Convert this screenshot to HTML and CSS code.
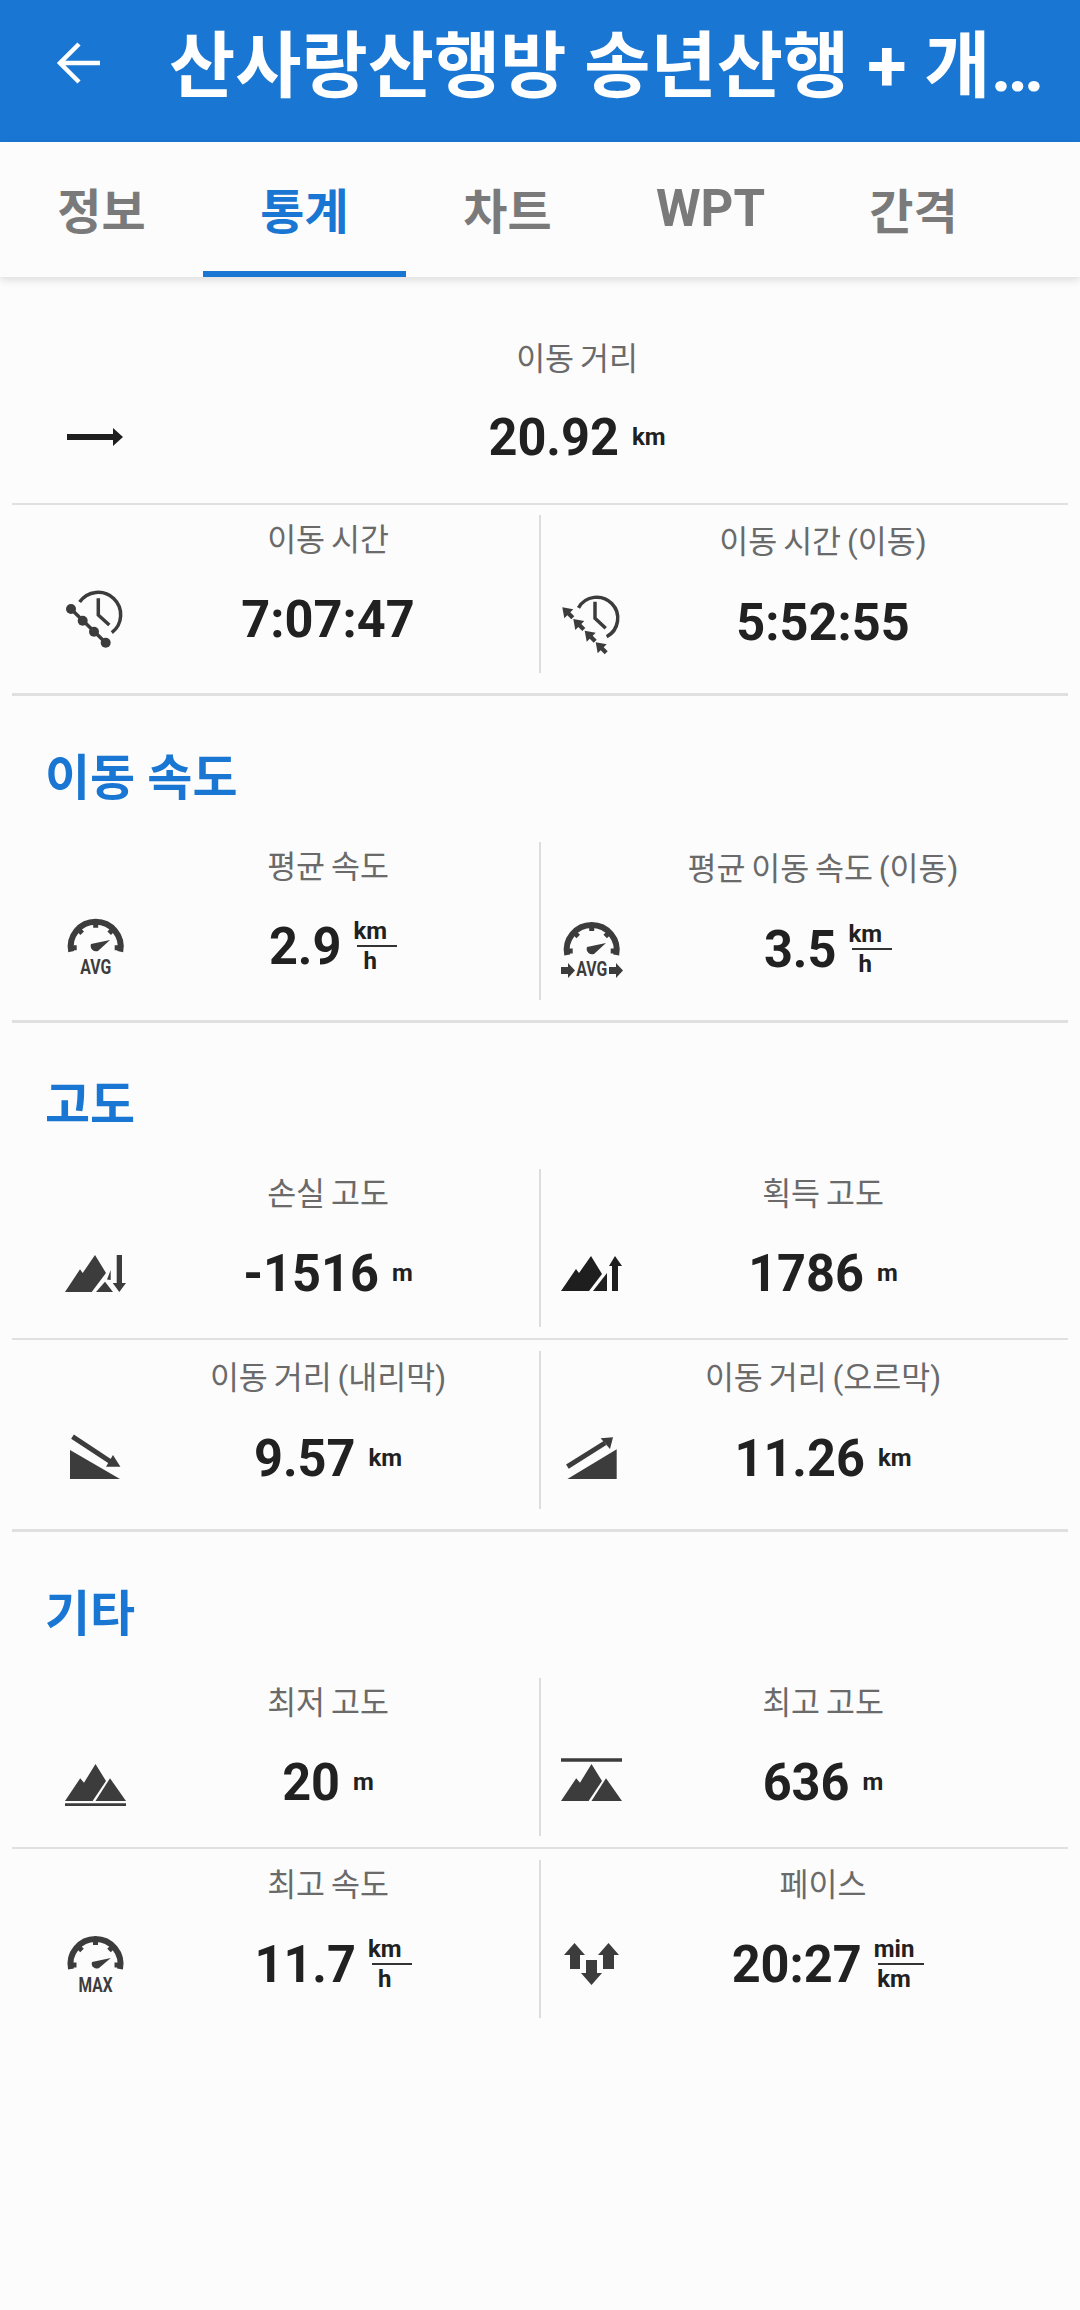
FILE: index.html
```html
<!DOCTYPE html>
<html lang="ko">
<head>
<meta charset="utf-8">
<title>통계</title>
<link rel="stylesheet" href="styles.css">
</head>
<body>
<svg class="defs" width="0" height="0" aria-hidden="true">
  <defs>
    <g id="peak"><path d="M0 49 15.2 26.3 19 30.7 30.5 12 41 29 27.6 49Z"/><path d="M45 26.3 61 49H30.5Z"/></g>
    <g id="gauge-ticks" fill="none" stroke="#3c3c3c">
      <path stroke-width="6" d="M-24.500 5A25 25 0 1 1 24.500 5"/>
      <path stroke-width="5" d="M-24 1h5M24 1h-5M0-24v5M-17-17l3.500 3.500M17-17l-3.500 3.500"/>
    </g>
  </defs>
</svg>
<header class="appbar">
  <svg class="back" viewBox="0 0 46 44"><path d="M44 22H5M23 3 4 22l19 19" fill="none" stroke="#fff" stroke-width="4.500"/></svg>
  <h1 class="title">산사랑산행방 송년산행 + 개…</h1>
</header>
<nav class="tabs">
  <span class="tab">정보</span>
  <span class="tab active">통계</span>
  <span class="tab">차트</span>
  <span class="tab latin">WPT</span>
  <span class="tab">간격</span>
</nav>
<main class="content">
  <section class="block">
    <div class="wide">
      <div class="cell full">
        <div class="label">이동 거리</div>
        <svg class="icon" viewBox="0 0 60 60"><path d="M2 27h46v-6l10 9-10 9v-6H2Z" fill="#1e1e1e"/></svg>
        <div class="value"><span class="num">20.92</span><span class="unit">km</span></div>
      </div>
    </div>
    <div class="row">
      <div class="cell">
        <div class="label">이동 시간</div>
        <svg class="icon" viewBox="0 -1 60 60">
          <path d="M14.600 12.100A22.500 22.500 0 1 1 46.800 42.700M33.300 8.300V25L44.300 35" fill="none" stroke="#3c3c3c" stroke-width="3.500"/>
          <path d="M6 19 40.700 52.700" stroke="#3c3c3c" stroke-width="3.500"/>
          <g fill="#3c3c3c"><circle cx="6" cy="19" r="5"/><circle cx="17.700" cy="30.700" r="5"/><circle cx="29" cy="41.700" r="5"/><circle cx="40.700" cy="52.700" r="5"/></g>
        </svg>
        <div class="value"><span class="num">7:07:47</span></div>
      </div>
      <div class="cell tall">
        <div class="label">이동 시간 (이동)</div>
        <svg class="icon" viewBox="0 2 60 60">
          <path d="M18.500 17.800A21 21 0 1 1 46.700 46.700M35 11.700V28.300L45.700 38.300" fill="none" stroke="#3c3c3c" stroke-width="3.500"/>
          <g fill="#3c3c3c">
            <path transform="translate(8.300 23.300)" d="M-6-6 5-4 2-1 6 3 3 6-1 2-4 5Z"/>
            <path transform="translate(19.300 35)" d="M-6-6 5-4 2-1 6 3 3 6-1 2-4 5Z"/>
            <path transform="translate(30.700 46.700)" d="M-6-6 5-4 2-1 6 3 3 6-1 2-4 5Z"/>
            <path transform="translate(41.700 58.300)" d="M-6-6 5-4 2-1 6 3 3 6-1 2-4 5Z"/>
          </g>
        </svg>
        <div class="value"><span class="num">5:52:55</span></div>
      </div>
    </div>
  </section>

  <section class="block">
    <h2 class="heading">이동 속도</h2>
    <div class="row">
      <div class="cell">
        <div class="label">평균 속도</div>
        <svg class="icon" viewBox="0 2 60 60">
          <use href="#gauge-ticks" x="30.700" y="32.700"/>
          <path d="M26 30 45 26 33 37A5.500 5.500 0 0 1 26 30Z" fill="#3c3c3c"/>
          <text class="badge" x="30.700" y="60" textLength="31" lengthAdjust="spacingAndGlyphs">AVG</text>
        </svg>
        <div class="value"><span class="num">2.9</span><span class="frac"><span>km</span><span class="bar"></span><span>h</span></span></div>
      </div>
      <div class="cell tall">
        <div class="label">평균 이동 속도 (이동)</div>
        <svg class="icon" viewBox="0 5 60 60">
          <use href="#gauge-ticks" x="31.700" y="36"/>
          <path d="M27 33 46 29 34 40A5.500 5.500 0 0 1 27 33Z" fill="#3c3c3c"/>
          <path d="M1 53h7v-4l7 7.500-7 7.500v-4H1ZM49 53h7v-4l7 7.500-7 7.500v-4h-7Z" fill="#3c3c3c"/>
          <text class="badge" x="31.700" y="62" textLength="31" lengthAdjust="spacingAndGlyphs">AVG</text>
        </svg>
        <div class="value"><span class="num">3.5</span><span class="frac"><span>km</span><span class="bar"></span><span>h</span></span></div>
      </div>
    </div>
  </section>

  <section class="block">
    <h2 class="heading">고도</h2>
    <div class="row">
      <div class="cell">
        <div class="label">손실 고도</div>
        <svg class="icon" viewBox="0 0 60 60">
          <path d="M0 49 15 26.300 17.700 30 30 12 41 30 26.700 49Z" fill="#3c3c3c"/>
          <path d="M40 38.700 31 49H48Z" fill="#3c3c3c"/>
          <path d="M45.700 27V37L42 36.500Z" fill="#3c3c3c"/>
          <path d="M51.700 12H57V40H61L54.300 49 47.700 40H51.700Z" fill="#3c3c3c"/>
        </svg>
        <div class="value"><span class="num">-1516</span><span class="unit">m</span></div>
      </div>
      <div class="cell">
        <div class="label">획득 고도</div>
        <svg class="icon" viewBox="0 0 60 60">
          <path d="M1 48 16 26 19 30 31 13 42 31 29 48Z" fill="#1e1e1e"/>
          <path d="M47 30V48H33Z" fill="#1e1e1e"/>
          <path d="M52 48V23H49L55 13 62 23H58V48Z" fill="#1e1e1e"/>
        </svg>
        <div class="value"><span class="num">1786</span><span class="unit">m</span></div>
      </div>
    </div>
    <div class="row">
      <div class="cell tall">
        <div class="label">이동 거리 (내리막)</div>
        <svg class="icon" viewBox="0 0 60 60">
          <path d="M5 22V51H55Z" fill="#3c3c3c"/>
          <path d="M7.500 8.700 46 34" stroke="#3c3c3c" stroke-width="5"/>
          <path d="M55.400 38.700H41L48 27Z" fill="#3c3c3c"/>
        </svg>
        <div class="value"><span class="num">9.57</span><span class="unit">km</span></div>
      </div>
      <div class="cell tall">
        <div class="label">이동 거리 (오르막)</div>
        <svg class="icon" viewBox="0 0 60 60">
          <path d="M7.400 51H56.700V21.300Z" fill="#3c3c3c"/>
          <path d="M7.400 38.700 45 15" stroke="#3c3c3c" stroke-width="5"/>
          <path d="M53 9.300 40.600 10.300 50 21Z" fill="#3c3c3c"/>
        </svg>
        <div class="value"><span class="num">11.26</span><span class="unit">km</span></div>
      </div>
    </div>
  </section>

  <section class="block">
    <h2 class="heading">기타</h2>
    <div class="row">
      <div class="cell">
        <div class="label">최저 고도</div>
        <svg class="icon" viewBox="0 0 60 60">
          <use href="#peak" fill="#3c3c3c"/>
          <path d="M0 51.300H61V54H0Z" fill="#3c3c3c"/>
        </svg>
        <div class="value"><span class="num">20</span><span class="unit">m</span></div>
      </div>
      <div class="cell">
        <div class="label">최고 고도</div>
        <svg class="icon" viewBox="0 0 60 60">
          <use href="#peak" x="1" fill="#3c3c3c"/>
          <path d="M1 6.300H62V9.700H1Z" fill="#3c3c3c"/>
        </svg>
        <div class="value"><span class="num">636</span><span class="unit">m</span></div>
      </div>
    </div>
    <div class="row">
      <div class="cell">
        <div class="label">최고 속도</div>
        <svg class="icon" viewBox="0 1 60 60">
          <use href="#gauge-ticks" x="30.500" y="31"/>
          <path d="M27 29 45.800 25 34 35A5 5 0 0 1 27 29Z" fill="#3c3c3c"/>
          <text class="badge" x="30.500" y="59" textLength="34" lengthAdjust="spacingAndGlyphs">MAX</text>
        </svg>
        <div class="value"><span class="num">11.7</span><span class="frac"><span>km</span><span class="bar"></span><span>h</span></span></div>
      </div>
      <div class="cell">
        <div class="label">페이스</div>
        <svg class="icon" viewBox="0 1 60 60">
          <path d="M14.500 10 25 22H20V36H10V22H4ZM48.500 10 59 22H54V36H43V22H38ZM26 27H37V40H42L31.500 52 21 40H26Z" fill="#3c3c3c"/>
        </svg>
        <div class="value"><span class="num">20:27</span><span class="frac"><span>min</span><span class="bar"></span><span>km</span></span></div>
      </div>
    </div>
  </section>
</main>
</body>
</html>
```

FILE: styles.css
```css
* { box-sizing: border-box; }
html, body { margin: 0; padding: 0; }
body {
  width: 1080px;
  height: 2310px;
  overflow: hidden;
  background: #fcfcfc;
  font-family: Roboto, "Noto Sans CJK KR", sans-serif;
}
.defs { position: absolute; }

.appbar {
  height: 142px;
  background: #1976d2;
  display: flex;
  align-items: center;
  padding: 0 0 0 56px;
  gap: 67px;
}
.back { width: 46px; height: 44px; flex: none; margin-top: -16px; }
.title {
  margin: -8px 0 0;
  color: #fff;
  font-size: 72px;
  font-weight: 700;
  white-space: nowrap;
  line-height: 80px;
}

.tabs {
  height: 135px;
  display: flex;
  background: #fcfcfc;
  box-shadow: 0 3px 8px rgba(0,0,0,.13);
  position: relative;
}
.tab {
  width: 203px;
  display: flex;
  align-items: center;
  justify-content: center;
  font-size: 48px;
  font-weight: 700;
  color: #7a7a7a;
  padding-bottom: 3px;
}
.tab.latin { font-size: 51px; }
.tab.active { color: #1976d2; border-bottom: 6px solid #1976d2; padding: 3px 0 0; }

.block { margin: 0 12px; border-bottom: 3px solid #e0e0e0; padding-bottom: 10px; }
.block:last-child { border-bottom: 0; }

.wide { border-bottom: 2px solid #e0e0e0; padding: 55px 0 17px; margin-bottom: 10px; }
.row { display: grid; grid-template-columns: 527px 529px; height: 158px; margin-bottom: 10px; }
.row + .row { position: relative; margin-top: 24px; }
.row + .row::before {
  content: "";
  position: absolute;
  left: 0;
  right: 0;
  top: -13px;
  border-top: 2px solid #e0e0e0;
}

.cell {
  display: grid;
  grid-template-columns: 60px 406px;
  grid-template-rows: 52px 104px;
  padding-left: 53px;
}
.cell + .cell { border-left: 2px solid #ddd; padding-left: 19px; }
.cell.tall { grid-template-rows: 56px 102px; }
.cell.full { grid-template-columns: 60px 904px; grid-template-rows: 56px 98px; }

.label {
  grid-column: 2;
  grid-row: 1;
  align-self: center;
  text-align: center;
  font-size: 31.5px;
  line-height: 50px;
  word-spacing: -2px;
  color: #6a6a6a;
  white-space: nowrap;
}
.icon {
  grid-column: 1;
  grid-row: 2;
  align-self: center;
  width: 60px;
  height: 60px;
  overflow: visible;
}
.value {
  grid-column: 2;
  grid-row: 2;
  display: flex;
  align-items: center;
  justify-content: center;
  gap: 13px;
  color: #212121;
  font-weight: 700;
}
.num { font-size: 50.5px; line-height: 60px; transform: scaleY(1.04); }
.unit { font-size: 24px; line-height: 28px; }
.frac {
  display: flex;
  flex-direction: column;
  align-items: center;
  font-size: 24px;
  line-height: 28px;
  margin-left: -1px;
}
.bar {
  align-self: stretch;
  height: 2px;
  margin: 0 -10px 0 4px;
  background: #333;
}

.badge {
  font-family: Roboto, sans-serif;
  font-size: 20px;
  font-weight: 700;
  fill: #3c3c3c;
  text-anchor: middle;
}

.heading {
  margin: 0 0 36px;
  padding: 51px 0 0 33px;
  height: 110px;
  font-size: 49px;
  line-height: 64px;
  font-weight: 700;
  color: #1976d2;
}
```
